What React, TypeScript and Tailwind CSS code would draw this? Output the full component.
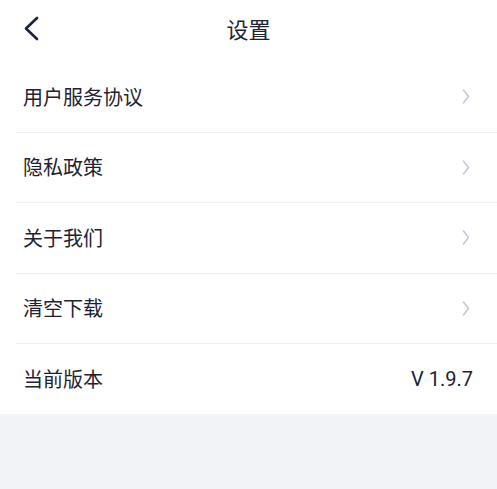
const items = ["用户服务协议", "隐私政策", "关于我们", "清空下载"];

function ChevronRight() {
  return (
    <svg width="8" height="15" viewBox="0 0 8 15" fill="none">
      <polyline
        points="1.5,1 6.5,7.5 1.5,14"
        stroke="#c3c7d6"
        strokeWidth="1.5"
        strokeLinecap="round"
        strokeLinejoin="round"
      />
    </svg>
  );
}

export default function App() {
  return (
    <div
      className="min-h-[489px] bg-[#f2f3f7] text-[#1e2233]"
      style={{ fontFamily: '"Noto Sans CJK SC", Roboto, sans-serif' }}
    >
      <header className="relative h-[62px] bg-white flex items-center justify-center">
        <button className="absolute left-[22px] top-[15px] p-0">
          <svg width="18" height="27" viewBox="0 0 18 27" fill="none">
            <polyline
              points="15,3 4,13.5 15,24"
              stroke="#1a2145"
              strokeWidth="2.6"
              strokeLinecap="round"
              strokeLinejoin="round"
            />
          </svg>
        </button>
        <h1 className="text-[22px] leading-none -mt-[7px]">设置</h1>
      </header>

      <ul className="bg-white pl-4">
        {items.map((label) => (
          <li
            key={label}
            className="h-[70.5px] flex items-center justify-between pl-[7px] pr-[27px] border-b border-[#f0f0f3]"
          >
            <span className="text-[20px] leading-none">{label}</span>
            <ChevronRight />
          </li>
        ))}
        <li className="h-[70px] flex items-center justify-between pl-[7px] pr-[24px]">
          <span className="text-[20px] leading-none">当前版本</span>
          <span
            className="text-[20px] leading-none"
            style={{ fontFamily: "Roboto, sans-serif" }}
          >
            V 1.9.7
          </span>
        </li>
      </ul>
    </div>
  );
}
